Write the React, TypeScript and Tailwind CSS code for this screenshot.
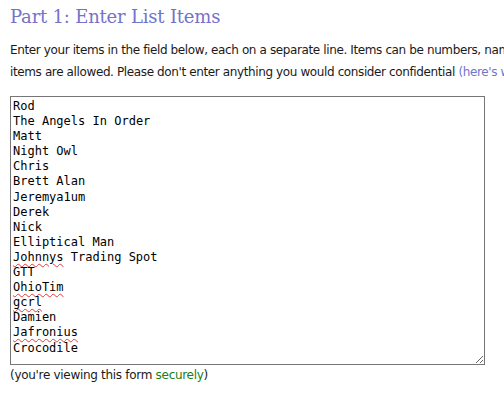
const items = [
  "Rod",
  "The Angels In Order",
  "Matt",
  "Night Owl",
  "Chris",
  "Brett Alan",
  "Jeremya1um",
  "Derek",
  "Nick",
  "Elliptical Man",
  "Johnnys Trading Spot",
  "GTT",
  "OhioTim",
  "gcrl",
  "Damien",
  "Jafronius",
  "Crocodile",
];

// words the browser's spell checker flags
const flagged = new Set(["Johnnys", "OhioTim", "gcrl", "Jafronius"]);

function Line({ text }: { text: string }) {
  const words = text.split(" ");
  return (
    <div className="whitespace-pre">
      {words.map((w, i) => (
        <span key={i}>
          {i > 0 && " "}
          {flagged.has(w) ? (
            <span className="underline decoration-wavy decoration-[#e23a3a] decoration-[1px] underline-offset-[2px]">{w}</span>
          ) : (
            w
          )}
        </span>
      ))}
    </div>
  );
}

export default function App() {
  return (
    <div className="w-[504px] h-[404px] overflow-hidden bg-white">
      <div className="w-[800px] px-[10px]">
        <h2 className="pt-[4px] font-['DejaVu_Serif',Georgia,serif] text-[18px] tracking-[-0.2px] leading-[26px] text-[#7373c9]">
          Part 1: Enter List Items
        </h2>

        <p className="mt-[9px] font-['DejaVu_Sans',Tahoma,sans-serif] text-[12px] tracking-[-0.38px] leading-[22px] text-[#1a1a1a] whitespace-nowrap">
          Enter your items in the field below, each on a separate line. Items can be numbers, names, email addresses, etc. A maximum of 10,000
          <br />
          items are allowed. Please don't enter anything you would consider confidential{" "}
          <span className="text-[#7373c9]">(here's why)</span>.
        </p>

        <div className="mt-[13px] w-[475px] h-[269px] border border-[#767676] px-[2px] pt-[2px] overflow-auto resize font-['DejaVu_Sans_Mono','Liberation_Mono',monospace] text-[12px] leading-[15.1px] text-black">
          {items.map((t, i) => (
            <Line key={i} text={t} />
          ))}
        </div>

        <p className="mt-[1px] font-['DejaVu_Sans',Tahoma,sans-serif] text-[12px] tracking-[-0.3px] leading-[18px] text-[#1a1a1a]">
          (you're viewing this form <span className="text-[#178017]">securely</span>)
        </p>
      </div>
    </div>
  );
}
